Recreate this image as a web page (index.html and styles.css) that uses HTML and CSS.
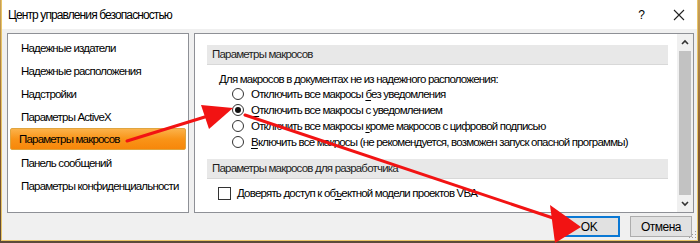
FILE: index.html
```html
<!DOCTYPE html>
<html lang="ru">
  <head>
    <meta charset="UTF-8" />
    <meta name="viewport" content="width=device-width, initial-scale=1.0" />
    <title>Центр управления безопасностью</title>
    <link rel="stylesheet" href="styles.css">
  </head>
  <body>
    <div class="window">
      <div class="titlebar">
        <span class="title">Центр управления безопасностью</span>
        <span class="help">?</span>
        <svg class="close" width="12" height="12" viewBox="0 0 12 12">
          <path d="M1 1 L11 11 M11 1 L1 11" stroke="#222" stroke-width="1.1" fill="none" />
        </svg>
      </div>

      <div class="dialog-body">
        <div class="panels">
          <ul class="nav">
            <li class="nav-item">Надежные издатели</li>
            <li class="nav-item">Надежные расположения</li>
            <li class="nav-item">Надстройки</li>
            <li class="nav-item">Параметры ActiveX</li>
            <li class="nav-item selected">Параметры макросов</li>
            <li class="nav-item">Панель сообщений</li>
            <li class="nav-item">Параметры конфиденциальности</li>
          </ul>

          <div class="content">
            <div class="scroll-area">
              <div class="section-head">Параметры макросов</div>
              <p class="lead">Для макросов в документах не из надежного расположения:</p>
              <div class="radio-list">
                <div class="radio"><span class="dot"></span><span>Отключить все макросы <u>б</u>ез уведомления</span></div>
                <div class="radio"><span class="dot checked"></span><span><u>О</u>тключить все макросы с уведомлением</span></div>
                <div class="radio"><span class="dot"></span><span>Отключить все макросы <u>к</u>роме макросов с цифровой подписью</span></div>
                <div class="radio"><span class="dot"></span><span><u>В</u>ключить все макросы (не рекомендуется, возможен запуск опасной программы)</span></div>
              </div>
              <div class="section-head second">Параметры макросов для разработчика</div>
              <div class="check"><span class="box"></span><span>Доверять доступ к об<u>ъ</u>ектной модели проектов VBA</span></div>
            </div>
            <div class="scrollbar">
              <svg width="16" height="14" viewBox="0 0 16 14">
                <path d="M5 8 L8 5 L11 8" stroke="#333" stroke-width="1.6" fill="none" />
              </svg>
              <div class="thumb"></div>
              <svg width="16" height="14" viewBox="0 0 16 14">
                <path d="M5 6 L8 9 L11 6" stroke="#333" stroke-width="1.6" fill="none" />
              </svg>
            </div>
          </div>
        </div>

        <div class="buttons">
          <button class="btn default">OK</button>
          <button class="btn">Отмена</button>
        </div>
      </div>

      <svg class="grip" width="8" height="8" viewBox="0 0 8 8">
        <rect x="6" y="0" width="1" height="1" fill="#999" />
        <rect x="3" y="3" width="1" height="1" fill="#999" />
        <rect x="6" y="3" width="1" height="1" fill="#999" />
        <rect x="0" y="6" width="1" height="1" fill="#999" />
        <rect x="3" y="6" width="1" height="1" fill="#999" />
        <rect x="6" y="6" width="1" height="1" fill="#999" />
      </svg>
    </div>

    <!-- red annotation arrows drawn over the dialog -->
    <svg class="arrows" width="700" height="243" viewBox="0 0 700 243">
      <line x1="127" y1="141" x2="208" y2="116" stroke="#f21313" stroke-width="3" stroke-linecap="round" />
      <polygon points="233,108 209,129 201,105" fill="#f21313" />
      <line x1="245" y1="115" x2="556" y2="219" stroke="#f21313" stroke-width="3" stroke-linecap="round" />
      <polygon points="581,227 550,205 555,243" fill="#f21313" />
    </svg>
  </body>
</html>
```

FILE: styles.css
```css
* {
  margin: 0;
  padding: 0;
  box-sizing: border-box;
}

body {
  width: 700px;
  height: 243px;
  overflow: hidden;
  position: relative;
  background: linear-gradient(#c9a25a, #8a5a2c 60%, #5b4a3a);
  font-family: "Liberation Sans", Arial, sans-serif;
  font-size: 11.5px;
  letter-spacing: -0.8px;
  color: #000;
}

.window {
  width: 697px;
  height: 241px;
  margin-left: 1px;
  border: 1px solid #e8c467;
  border-top: none;
  background: #f0f0f0;
  display: flex;
  flex-direction: column;
  position: relative;
}

.titlebar {
  height: 29px;
  background: #fff;
  display: flex;
  align-items: center;
  padding-left: 6px;
  flex-shrink: 0;
}

.title {
  flex: 1;
  font-size: 12px;
  letter-spacing: -0.9px;
  color: #000;
}

.help {
  font-size: 12px;
  margin-right: 29px;
}

.close {
  margin-right: 12px;
}

.dialog-body {
  flex: 1;
  padding: 4px 5px 0 5px;
  display: flex;
  flex-direction: column;
}

.panels {
  display: flex;
  gap: 5px;
  height: 180px;
  margin-right: -2px;
}

.nav {
  list-style: none;
  width: 182px;
  background: #fff;
  border: 1px solid #8e9096;
  padding-top: 2px;
}

.nav-item {
  height: 23px;
  line-height: 24px;
  padding-left: 11px;
  margin: 0 2px;
  white-space: nowrap;
}

.nav-item.selected {
  height: 22px;
  line-height: 21px;
  margin-bottom: 1px;
  padding-left: 8px;
  border: 1px solid #e0a540;
  border-radius: 2px;
  background: linear-gradient(#fbb24a, #f99418 50%, #f7870a);
}

.content {
  flex: 1;
  display: flex;
  background: #fff;
  border: 1px solid #8e9096;
}

.scroll-area {
  flex: 1;
  padding: 11px 9px 0 12px;
}

.section-head {
  height: 20px;
  line-height: 19px;
  padding-left: 5px;
  background: #e8e8e8;
  border-bottom: 1px solid #d8d8d8;
  color: #1e1e1e;
}

.section-head.second {
  margin-top: 9px;
}

.lead {
  margin-top: 6px;
  padding-left: 12px;
  line-height: 16px;
  white-space: nowrap;
}

.radio-list {
  margin-top: -1px;
  padding-left: 25px;
}

.radio,
.check {
  display: flex;
  align-items: center;
  height: 16px;
  white-space: nowrap;
}

.dot {
  width: 12px;
  height: 12px;
  border: 1px solid #333;
  border-radius: 50%;
  background: #fff;
  margin-right: 7px;
  flex-shrink: 0;
  position: relative;
}

.dot.checked::after {
  content: "";
  position: absolute;
  left: 2px;
  top: 2px;
  width: 6px;
  height: 6px;
  border-radius: 50%;
  background: #111;
}

.check {
  margin-top: 6px;
  padding-left: 11px;
}

.box {
  width: 13px;
  height: 13px;
  border: 1px solid #333;
  background: #fff;
  margin-right: 6px;
}

u {
  text-decoration-thickness: 1px;
  text-underline-offset: 2px;
}

.scrollbar {
  width: 16px;
  background: #f0f0f0;
  display: flex;
  flex-direction: column;
  align-items: center;
  padding: 2px 0;
}

.thumb {
  flex: 1;
  width: 12px;
  margin: 1px 0;
  background: #c2c2c2;
}

.buttons {
  display: flex;
  justify-content: flex-end;
  gap: 10px;
  margin-top: 3px;
}

.btn {
  width: 62px;
  height: 21px;
  font-family: inherit;
  font-size: 12px;
  letter-spacing: -0.5px;
  color: #000;
  background: #e1e1e1;
  border: 1px solid #adadad;
}

.btn.default {
  border: 2px solid #0a78d4;
}

.grip {
  position: absolute;
  right: 0;
  bottom: 1px;
}

.arrows {
  position: absolute;
  left: 0;
  top: 0;
  pointer-events: none;
}
```
